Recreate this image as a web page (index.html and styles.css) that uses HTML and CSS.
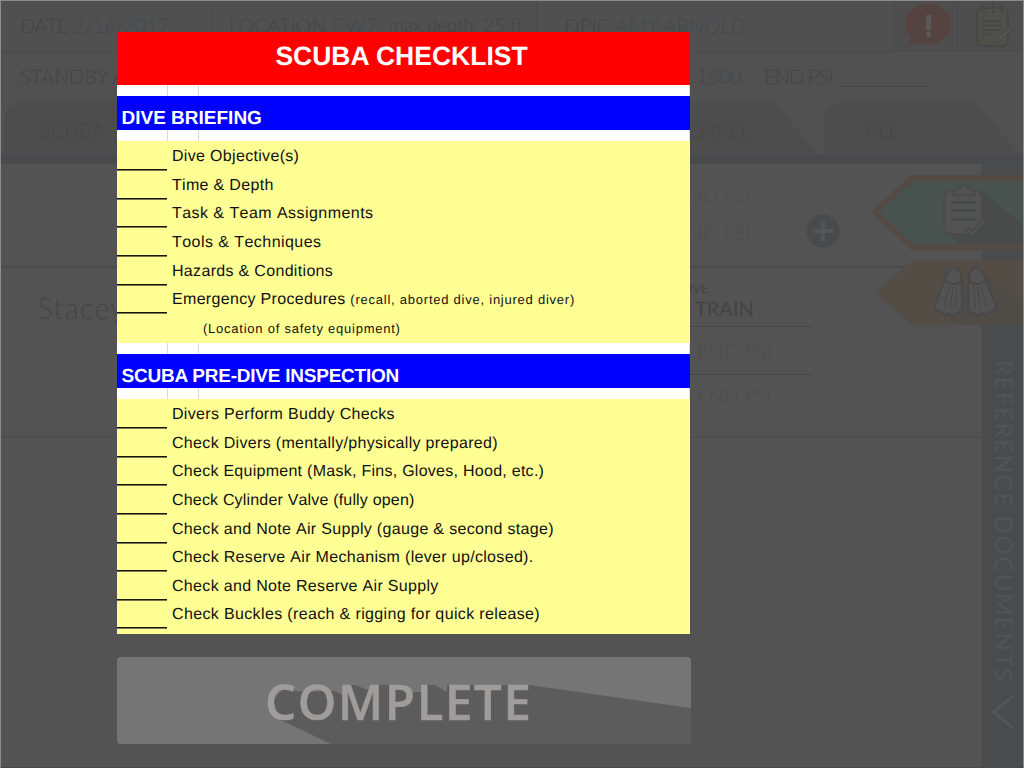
FILE: index.html
```html
<!DOCTYPE html>
<html lang="en">
<head>
<meta charset="utf-8">
<title>Scuba Checklist</title>
<link rel="stylesheet" href="styles.css">
</head>
<body>
<div class="screen">
  <header class="info">
    <div class="cell date"><span>DATE <b>2/16/2017</b></span></div>
    <div class="cell location"><span>LOCATION <b>CW7</b></span><span class="depth">max depth: 25 ft</span></div>
    <div class="cell dpic"><span>DPIC <b>AMY ARNOLD</b></span></div>
    <div class="cell icon">
      <svg width="64" height="51" viewBox="894 0 64 51"><path class="alert" d="M928 3c13 0 23 8 23 20s-10 20-23 20c-4 0-8-1-11-2l-9 4 3-9c-4-4-6-8-6-13 0-12 10-20 23-20z"/><path class="light" d="M926 14h5v15h-5z"/><circle class="light" cx="928.500" cy="33.500" r="2.700"/></svg>
    </div>
    <div class="cell icon last">
      <svg width="64" height="51" viewBox="958 0 64 51"><rect class="note" x="977" y="7" width="31" height="38" rx="6"/><path class="ink" d="M984 2v10M993 2v10M1002 2v10M982 20h20M982 24.500h20M982 29h20M982 33.500h8"/><path class="pencil" d="M995 39l15-13 2 3-14 13-4 1z"/></svg>
    </div>
  </header>
  <section class="standby">
    <span>STANDBY AMY ARNOLD</span>
    <span class="psi">PSI <b>1500</b></span>
    <span class="end">END PSI</span>
    <i class="blank"></i>
  </section>
  <nav class="tabs">
    <div class="tab"><svg width="272" height="53"><path d="M0 53V22Q0 0 22 0H222L270 53z"/></svg><span>SCUBA</span></div>
    <div class="tab"><svg width="272" height="53"><path d="M0 53V22Q0 0 22 0H222L270 53z"/></svg></div>
    <div class="tab snorkel"><svg width="272" height="53"><path d="M0 53V22Q0 0 22 0H222L270 53z"/></svg><span>SNORKEL</span></div>
    <div class="tab all"><svg width="198" height="53"><path d="M0 53V22Q0 0 22 0H149L197 53z"/></svg><span>ALL</span></div>
  </nav>
  <div class="band"></div>
  <div class="work">
    <main class="divers">
      <section class="diver first">
        <div class="readings faint"><span>END PSI</span><span>END PSI</span></div>
        <svg class="plus" width="34" height="34"><circle cx="17" cy="17" r="16.500"/><path d="M17 7v20M7 17h20"/></svg>
      </section>
      <section class="diver second">
        <div class="name">Stacey</div>
        <div class="details">
          <small>OBJECTIVE</small>
          <strong>TRAIN</strong>
          <span class="faint">END PSI</span>
          <span class="faint plain">END PSI</span>
        </div>
      </section>
    </main>
    <aside class="reference">
      <span>REFERENCE DOCUMENTS</span>
      <svg width="22" height="38"><path d="M21 2L2 18L21 34"/></svg>
    </aside>
  </div>
</div>

<svg class="tags" width="152" height="152" viewBox="871 174 152 152">
  <path fill="#534a43" d="M871 212l40-37h112v75H911z"/>
  <path fill="#48524e" d="M879 212l34-31h110v63H913z"/>
  <path fill="#484b4a" d="M981 190l42 35v19h-63l-14-12z"/>
  <g fill="#535353" stroke="#494b4a" stroke-width="2" stroke-linejoin="round">
    <rect x="944" y="191" width="38" height="43" rx="7"/>
    <path d="M953 195q0-6 7-6 1-4 4-4 3 0 4 4 7 0 7 6z"/>
    <path d="M965 229q2-3 5 0l3 2 9-12q4-1 4 3l-12 14q-5 0-9-7z"/>
  </g>
  <path d="M952 202.500h23M952 210.500h23M952 219.500h23" stroke="#484949" stroke-width="3" stroke-linecap="round"/>
  <path fill="#534d46" d="M875 292l38-32h110v65H912z"/>
  <path fill="#4f4b47" d="M982 273l41 32v20h-66l-14-13z"/>
  <g fill="#535353" stroke="#484848" stroke-width="2" stroke-linejoin="round">
    <path d="M956 268q-4-1-9 6-3 5-4 10l-9 24q4 4 8 4 1 2 3 3 2-2 4-2 1 2 3 3 4-4 10-4V284q0-14-6-16z"/>
    <path fill="none" d="M944 279q4 5 9 5 5 0 9-4"/>
    <path fill="none" stroke-width="1" d="M949 287l-5 20M953 287l-3 21M957 286l-2 22"/>
  </g>
  <g fill="#535353" stroke="#484848" stroke-width="2" stroke-linejoin="round" transform="translate(1930.500 0) scale(-1 1)">
    <path d="M956 268q-4-1-9 6-3 5-4 10l-9 24q4 4 8 4 1 2 3 3 2-2 4-2 1 2 3 3 4-4 10-4V284q0-14-6-16z"/>
    <path fill="none" d="M944 279q4 5 9 5 5 0 9-4"/>
    <path fill="none" stroke-width="1" d="M949 287l-5 20M953 287l-3 21M957 286l-2 22"/>
  </g>
</svg>

<div class="dialog">
  <article class="sheet">
    <h1>SCUBA CHECKLIST</h1>
    <div class="gap"></div>
    <h2>DIVE BRIEFING</h2>
    <div class="gap"></div>
    <ul>
      <li><i></i><span>Dive Objective(s)</span></li>
      <li><i></i><span>Time &amp; Depth</span></li>
      <li><i></i><span class="loose">Task &amp; Team Assignments</span></li>
      <li><i></i><span class="loose">Tools &amp; Techniques</span></li>
      <li><i></i><span>Hazards &amp; Conditions</span></li>
      <li><i></i><span>Emergency Procedures <small>(recall, aborted dive, injured diver)</small></span></li>
      <li class="sub"><small>(Location of safety equipment)</small></li>
    </ul>
    <div class="gap"></div>
    <h2 class="narrow">SCUBA PRE-DIVE INSPECTION</h2>
    <div class="gap"></div>
    <ul class="inspection">
      <li><i></i><span>Divers Perform Buddy Checks</span></li>
      <li><i></i><span>Check Divers (mentally/physically prepared)</span></li>
      <li><i></i><span class="snug">Check Equipment (Mask, Fins, Gloves, Hood, etc.)</span></li>
      <li><i></i><span class="tight">Check Cylinder Valve (fully open)</span></li>
      <li><i></i><span>Check and Note Air Supply (gauge &amp; second stage)</span></li>
      <li><i></i><span>Check Reserve Air Mechanism (lever up/closed).</span></li>
      <li><i></i><span>Check and Note Reserve Air Supply</span></li>
      <li><i></i><span class="wide">Check Buckles (reach &amp; rigging for quick release)</span></li>
    </ul>
  </article>
  <button class="complete">
    <svg width="574" height="87" viewBox="117 657 574 87"><path d="M279 719L331 744H691V708L529 685H371L368 690 355 685H344L343 695 335 691 304 692 283 689 273 700z"/><path class="lit" d="M392 683h32v9l-12 0zM431 683h16v9z"/></svg>
    <span>COMPLETE</span>
  </button>
</div>
</body>
</html>
```
FILE: styles.css
```css
* { box-sizing: border-box; }
body { margin: 0; width: 1024px; height: 768px; overflow: hidden; background: #535353; font-family: Lato, sans-serif; text-rendering: geometricPrecision; }
svg { display: block; flex: none; }
b { font-weight: inherit; color: #43484e; }

.screen { width: 1024px; height: 768px; display: flex; flex-direction: column; border: 1px solid #8c8c8c; border-bottom-color: #494949; background: #535353; color: #444; font-size: 20px; font-weight: 300; white-space: nowrap; }
.info { height: 51px; flex: none; display: flex; background: #505050; border-bottom: 1px solid #494949; line-height: 50px; }
.cell { border-right: 1px solid #4a4a4a; flex: none; }
.date { width: 210px; padding-left: 19px; letter-spacing: -.4px; }
.location { width: 326px; padding-left: 18px; display: flex; gap: 12px; letter-spacing: -.1px; }
.depth { font-size: 19px; letter-spacing: -.15px; }
.dpic { width: 357px; padding-left: 27px; letter-spacing: .2px; }
.icon { width: 64px; background: #4e4e4e; }
.icon.last { border: 0; }
.alert { fill: #54433f; }
.light { fill: #595959; }
.note { fill: #50504a; stroke: #464646; stroke-width: 2; }
.ink { fill: none; stroke: #464646; stroke-width: 2; }
.pencil { fill: #535350; stroke: #464646; }

.standby { height: 50px; flex: none; display: flex; line-height: 51px; background: #515151; padding-left: 19px; }
.standby > span:first-child { width: 645px; }
.psi { width: 99px; letter-spacing: -.35px; }
.end { width: 74px; letter-spacing: -.9px; }
.blank { width: 90px; height: 35px; border-bottom: 1px solid #444; }

.tabs { height: 53px; flex: none; display: grid; grid-template-columns: 273px 273px 274px 198px; padding-left: 3px; background: #515151; }
.tab { display: grid; color: #474747; }
.tab > * { grid-area: 1 / 1; }
.tab path { fill: #4d4d4d; }
.tab span { padding-left: 36px; line-height: 59px; height: 53px; }
.tab.snorkel span { justify-self: end; padding-right: 73px; }
.tab.all span { padding-left: 41px; }
.band { height: 9px; flex: none; background: #484a4d; }
.work { flex: 1; display: flex; min-height: 0; }
.divers { width: 981px; }
.diver { display: flex; }
.first { height: 104px; border-bottom: 2px solid #4a4a4a; padding: 12px 0 0 675px; gap: 55px; }
.second { height: 170px; border-bottom: 2px solid #4e4e4e; padding-left: 36px; }
.faint { color: #4e4e4e; }
.readings { display: grid; grid-auto-rows: 38px; line-height: 38px; }
.plus { margin: 38px 0 0; }
.plus circle { fill: #484a4c; }
.plus path { stroke: #555; stroke-width: 4; }
.name { width: 600px; padding-top: 22px; line-height: 36px; font-size: 30px; letter-spacing: .8px; color: #464646; }
.details { width: 176px; padding-top: 13px; display: flex; flex-direction: column; }
.details small { font-size: 12px; line-height: 16px; padding-left: 8px; font-weight: 400; }
.details strong { font-size: 20px; font-weight: 400; line-height: 24px; padding: 0 0 5px 58px; border-bottom: 1px solid #464646; }
.details .faint { line-height: 46px; height: 48px; padding: 2px 0 0 60px; border-bottom: 1px solid #464646; }
.details .plain { border: 0; height: 40px; line-height: 38px; }
.reference { width: 41px; background: #4a4b4d; color: #535353; display: flex; flex-direction: column; align-items: center; padding-top: 196px; gap: 11px; }
.reference span { writing-mode: vertical-rl; height: 323px; line-height: 36px; font-size: 24px; font-weight: 400; letter-spacing: 1.6px; }
.reference path { fill: none; stroke: #555; stroke-width: 3; }

/* Bookmark tags sit over the page edge */
.tags { position: absolute; left: 871px; top: 174px; }

/* Modal layer over the dimmed page */
.dialog { position: absolute; left: 117px; top: 32px; width: 574px; display: flex; flex-direction: column; gap: 23px; }
.sheet { width: 573px; height: 602px; overflow: hidden; background: #ffff94; color: #111; font-family: "Liberation Sans", Arial, sans-serif; white-space: nowrap; }
h1, h2, ul { margin: 0; padding: 0; }
h1 { height: 53px; background: #f00; color: #fff; text-align: center; font-size: 26.500px; line-height: 48px; padding-right: 4px; }
h2 { height: 34px; background: #00f; color: #fff; font-size: 19px; line-height: 45px; padding-left: 4.500px; }
.narrow { letter-spacing: -.23px; }
.gap { height: 11px; background: linear-gradient(#d8d8d8, #d8d8d8) 50px 0 / 1px 100% no-repeat, linear-gradient(#d8d8d8, #d8d8d8) 81px 0 / 1px 100% no-repeat, #fff; border-right: 1px solid #ddd; }
li { display: flex; height: 28.650px; font-size: 16px; line-height: 32px; letter-spacing: .32px; font-kerning: none; }
ul { height: 202px; }
.inspection { height: 236px; }
li i { width: 50px; height: 29px; flex: none; border-bottom: 1px solid #15150c; box-shadow: 0 1px #77774e; }
li span { padding-left: 5px; }
li small { font-size: 13px; letter-spacing: .76px; }
.loose { letter-spacing: .45px; }
.snug { letter-spacing: .27px; }
.tight { letter-spacing: .18px; }
.wide { letter-spacing: .36px; }
.sub { padding-left: 86px; line-height: 31px; }
.complete { width: 574px; height: 87px; border: 0; padding: 0; border-radius: 4px; overflow: hidden; background: #757575; display: grid; }
.complete > * { grid-area: 1 / 1; }
.complete path { fill: #5c5c5c; }
.complete .lit { fill: #757575; }
.complete span { z-index: 1; color: #a09c9b; font: 600 49px/88px "Open Sans", sans-serif; text-align: left; padding-left: 148px; letter-spacing: 1.700px; -webkit-text-stroke: .6px #a09c9b; }
```
